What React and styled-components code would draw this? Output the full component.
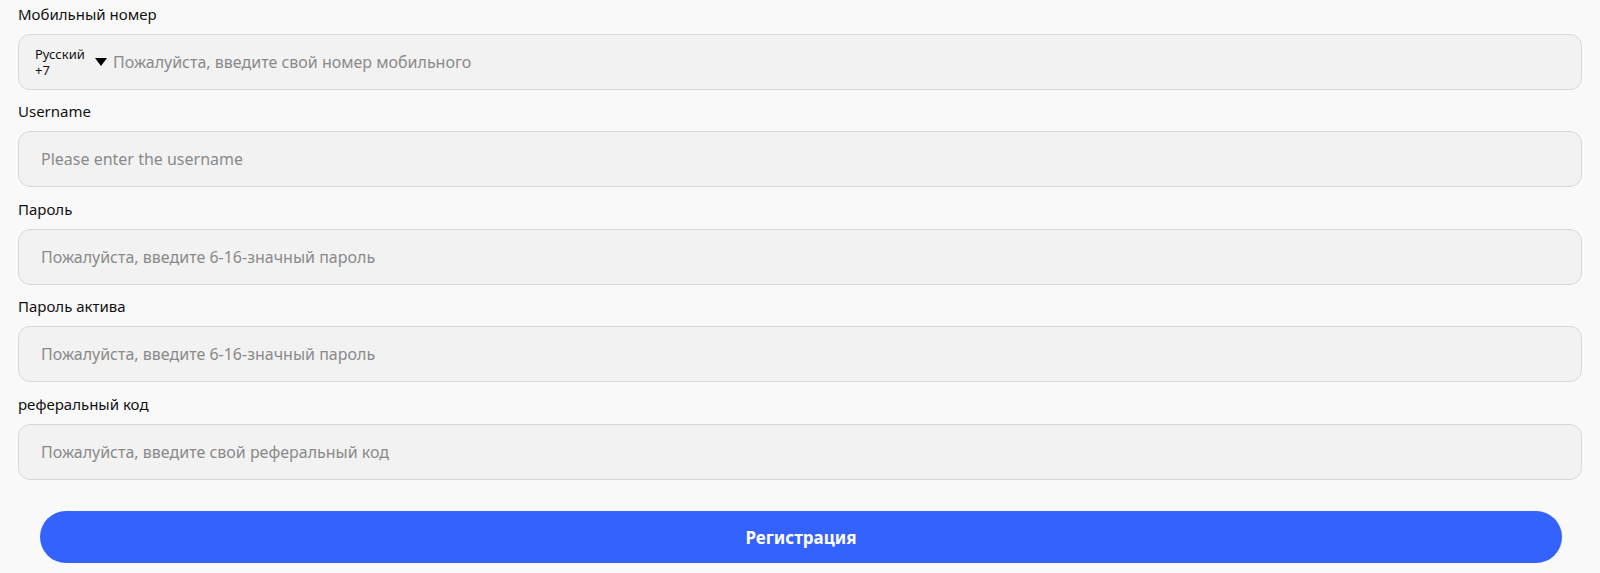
import React from 'react';
import styled, { createGlobalStyle } from 'styled-components';

const GlobalStyle = createGlobalStyle`
  html, body {
    margin: 0;
    padding: 0;
    background: #f9f9f9;
    font-family: "Noto Sans", "Open Sans", Arial, sans-serif;
  }
`;

const fields = [
  { label: 'Username', placeholder: 'Please enter the username' },
  { label: 'Пароль', placeholder: 'Пожалуйста, введите 6-16-значный пароль', type: 'password' },
  { label: 'Пароль актива', placeholder: 'Пожалуйста, введите 6-16-значный пароль', type: 'password' },
  { label: 'реферальный код', placeholder: 'Пожалуйста, введите свой реферальный код' },
];

const App = () => {
  return (
    <>
      <GlobalStyle />
      <Form>
        <Field>
          <Label>Мобильный номер</Label>
          <InputBox>
            <CountryPick>
              <span>Русский</span>
              <span>+7</span>
            </CountryPick>
            <Caret />
            <Input placeholder="Пожалуйста, введите свой номер мобильного" $compact />
          </InputBox>
        </Field>
        {fields.map((f) => (
          <Field key={f.label}>
            <Label>{f.label}</Label>
            <InputBox>
              <Input type={f.type || 'text'} placeholder={f.placeholder} />
            </InputBox>
          </Field>
        ))}
        <SubmitBtn type="button">Регистрация</SubmitBtn>
      </Form>
    </>
  );
};

export default App;

const Form = styled.div`
  padding: 3.5px 18px 0 18px;
  display: flex;
  flex-direction: column;
`;

const Field = styled.div`
  display: flex;
  flex-direction: column;
  gap: 10px;
  margin-bottom: 11.6px;
`;

const Label = styled.div`
  font-size: 15px;
  line-height: 20px;
  height: 20px;
  color: #111;
`;

const InputBox = styled.div`
  height: 56px;
  box-sizing: border-box;
  display: flex;
  align-items: center;
  background: #f2f2f2;
  border: 1px solid #d8d8d8;
  border-radius: 12px;
  padding: 0 0 0 16px;
`;

const CountryPick = styled.div`
  display: flex;
  flex-direction: column;
  font-size: 13px;
  line-height: 16px;
  color: #111;
  min-width: 60px;
`;

const Caret = styled.span`
  width: 0;
  height: 0;
  border-left: 6px solid transparent;
  border-right: 6px solid transparent;
  border-top: 8px solid #000;
  margin: 0 6px 0 0;
`;

const Input = styled.input`
  flex: 1;
  min-width: 0;
  border: 0;
  outline: none;
  background: transparent;
  font-family: inherit;
  font-size: 16px;
  color: #333;
  padding: 0 0 0 ${(p) => (p.$compact ? '0' : '6px')};
  height: 24px;
  &::placeholder {
    color: #8a8a8a;
  }
`;

const SubmitBtn = styled.button`
  margin: 20px 20px 0 22px;
  height: 52px;
  border: 0;
  border-radius: 26px;
  background: #3362fe;
  color: #fff;
  font-family: inherit;
  font-size: 17px;
  font-weight: 700;
  cursor: pointer;
`;
